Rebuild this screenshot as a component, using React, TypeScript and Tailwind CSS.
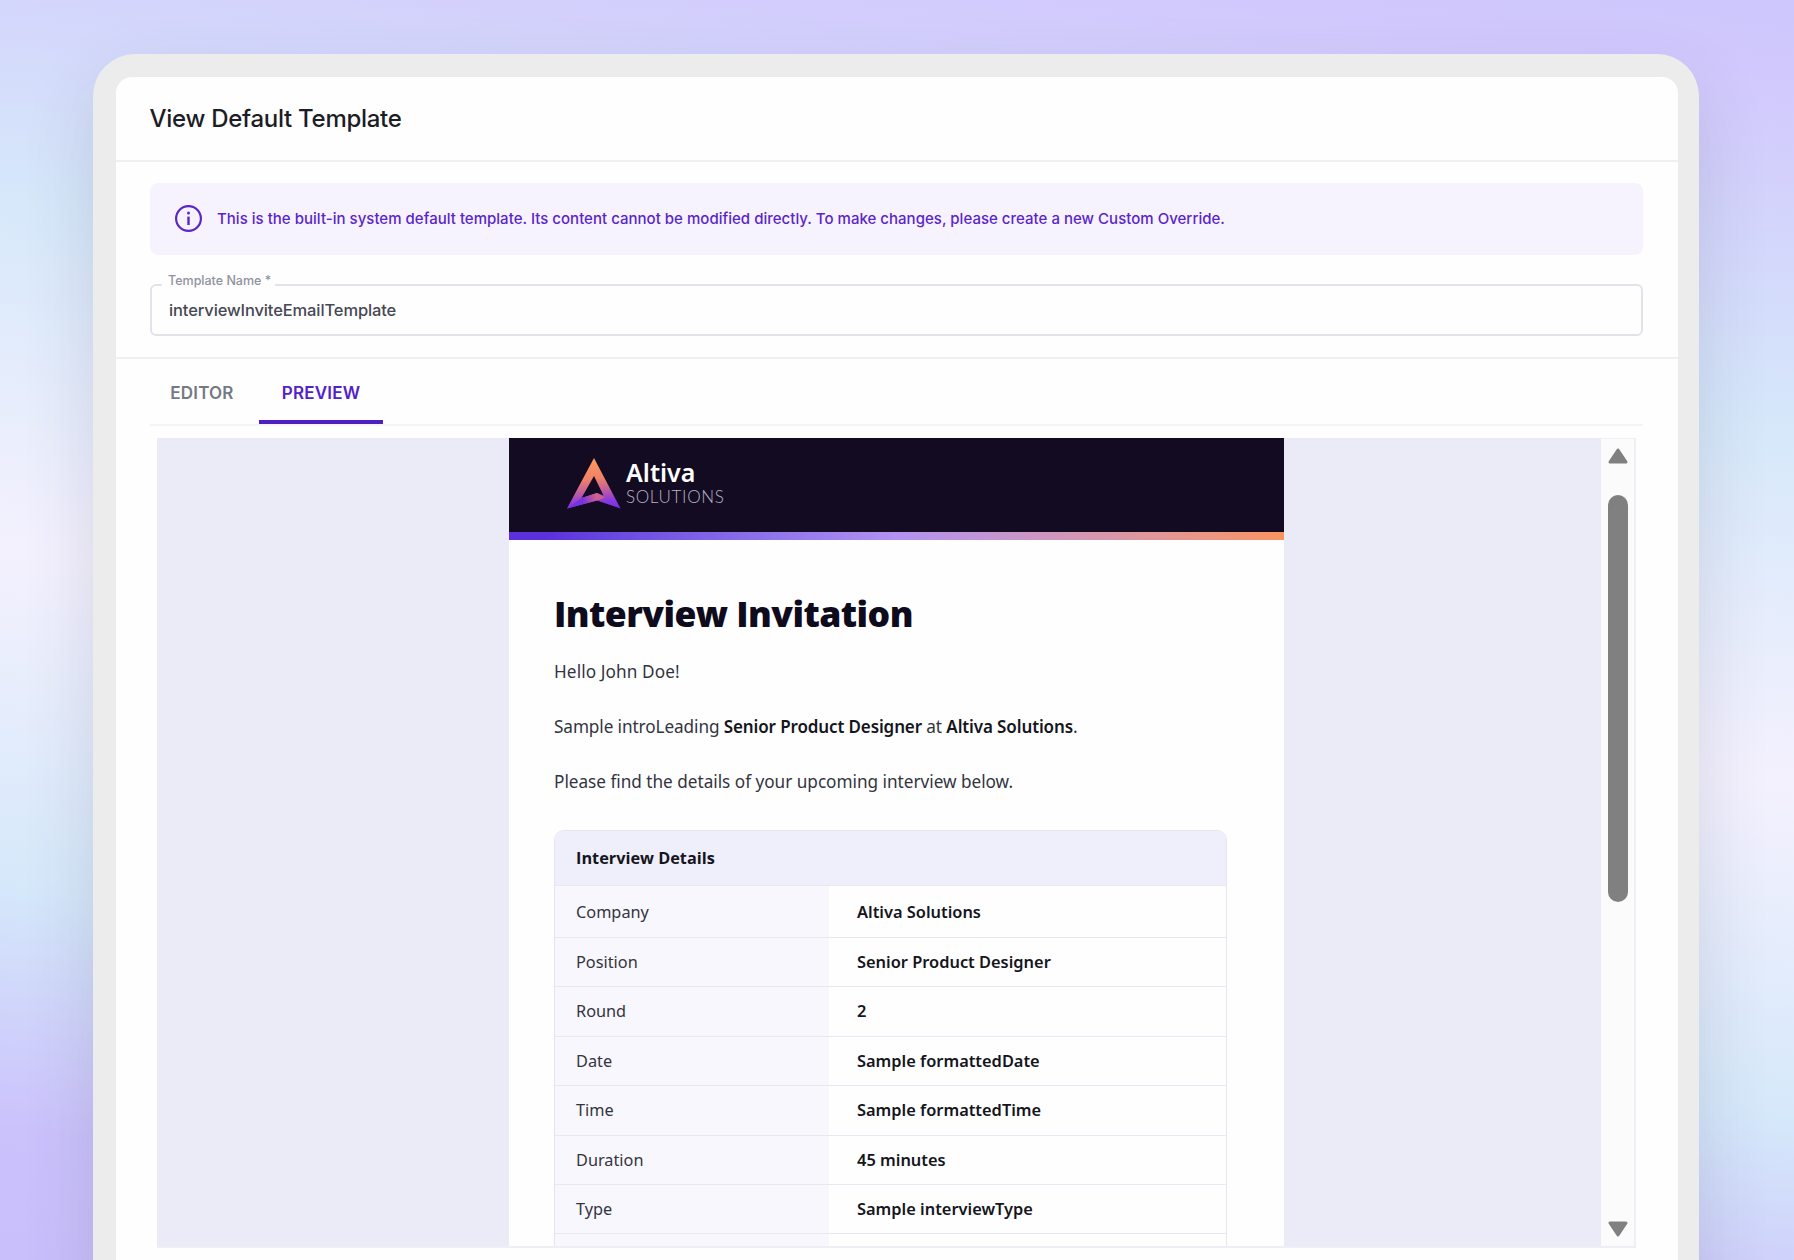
import type { ReactNode } from "react";

const details = [
  { label: "Company", value: "Altiva Solutions" },
  { label: "Position", value: "Senior Product Designer" },
  { label: "Round", value: "2" },
  { label: "Date", value: "Sample formattedDate" },
  { label: "Time", value: "Sample formattedTime" },
  { label: "Duration", value: "45 minutes" },
  { label: "Type", value: "Sample interviewType" },
];

function AltivaMark() {
  return (
    <svg width="54" height="52" viewBox="0 0 54 52" aria-hidden="true">
      <defs>
        <linearGradient id="mark" gradientUnits="userSpaceOnUse" x1="25" y1="0" x2="31" y2="51">
          <stop offset="0" stopColor="#fd9a5e" />
          <stop offset="0.4" stopColor="#f08268" />
          <stop offset="0.64" stopColor="#c25f9c" />
          <stop offset="0.85" stopColor="#8a3bdc" />
          <stop offset="1" stopColor="#7a2fe8" />
        </linearGradient>
        <linearGradient id="fold" gradientUnits="userSpaceOnUse" x1="0" y1="50" x2="40" y2="36">
          <stop offset="0" stopColor="#7a2fe8" />
          <stop offset="0.4" stopColor="#7434dc" />
          <stop offset="0.75" stopColor="#d4608f" />
          <stop offset="1" stopColor="#c9598f" />
        </linearGradient>
      </defs>
      <path
        d="M27 0 L53.5 50.5 L30 42.5 L0 50.5 Z M27 18 L14.5 40 L30 35 L36.5 37.5 Z"
        fill="url(#mark)"
        fillRule="evenodd"
      />
      <path d="M14.5 40 L30 35 L38 39.5 L30 42.5 L0 50.5 Z" fill="url(#fold)" />
    </svg>
  );
}

function InfoIcon() {
  return (
    <svg width="32" height="32" viewBox="0 0 32 32" fill="none" aria-hidden="true">
      <circle cx="16.5" cy="15.5" r="12.4" stroke="#5a25cb" strokeWidth="2.2" />
      <circle cx="16.5" cy="10.1" r="1.5" fill="#5a25cb" />
      <path d="M16.5 13.6 V22" stroke="#5a25cb" strokeWidth="2.4" />
    </svg>
  );
}

function Tab({ active, children }: { active?: boolean; children: ReactNode }) {
  return (
    <button
      className={
        active
          ? "h-full w-[124px] border-b-[4px] border-[#4f1fc4] pt-[9px] text-[#5221c8]"
          : "mr-[5px] h-full w-[104px] border-b-[4px] border-transparent pt-[9px] text-[#757984]"
      }
    >
      {children}
    </button>
  );
}

function Arrow({ down }: { down?: boolean }) {
  return (
    <svg width="20" height="16" viewBox="0 0 20 16" className={down ? "rotate-180" : ""} aria-hidden="true">
      <path
        d="M10 2 L18 14 L2 14 Z"
        fill="#808080"
        stroke="#808080"
        strokeWidth="3"
        strokeLinejoin="round"
      />
    </svg>
  );
}

function Strong({ children }: { children: ReactNode }) {
  return <b className="text-[17px] font-semibold tracking-[-0.12px] text-[#15151d]">{children}</b>;
}

function EmailPreview() {
  return (
    <article className="w-[775px] shrink-0 bg-[#fefefe] font-['Noto_Sans',sans-serif] text-[17.2px] text-[#33343f]">
      <header className="flex h-[94px] items-start bg-[#130b22] pt-[20px] pl-[58px]">
        <AltivaMark />
        <div className="-mt-px ml-[5px]">
          <p className="text-[25px] leading-[30px] font-semibold text-white">Altiva</p>
          <p className="font-['Lato',sans-serif] text-[17px] leading-[20px] font-light tracking-[0.65px] text-[#b9b5c4]">
            SOLUTIONS
          </p>
        </div>
      </header>
      <div className="h-[8px] bg-linear-to-r from-[#5b31dd] from-5% via-[#b292f2] to-[#fa935f]" />
      <div className="pr-[57px] pl-[45px]">
        <h1 className="pt-[49px] font-['Open_Sans',sans-serif] text-[35.5px] leading-[48px] font-extrabold tracking-[-0.55px] text-[#0e0b1c]">
          Interview Invitation
        </h1>
        <p className="mt-[21px] leading-[28px] tracking-[0.1px]">Hello John Doe!</p>
        <p className="mt-[27px] leading-[28px] tracking-[-0.1px]">
          Sample introLeading <Strong>Senior Product Designer</Strong> at <Strong>Altiva Solutions</Strong>.
        </p>
        <p className="mt-[27px] leading-[28px] tracking-[-0.02px]">
          Please find the details of your upcoming interview below.
        </p>
        <section className="mt-[34px] overflow-hidden rounded-t-[10px] border border-[#e6e5f2]">
          <h2 className="h-[54px] bg-[#efeefb] pl-[21px] font-['Open_Sans',sans-serif] text-[16.3px] leading-[55px] font-bold text-[#15151d]">
            Interview Details
          </h2>
          <dl>
            {details.map((row) => (
              <div
                key={row.label}
                className="flex h-[49.4px] border-t border-[#e9e8f2] leading-[48px] first:h-[52px] first:leading-[52px]"
              >
                <dt className="w-[274px] bg-[#f8f7fd] pl-[21px] text-[16.3px]">{row.label}</dt>
                <dd className="pl-[28px] text-[16.4px] font-semibold text-[#15151d]">{row.value}</dd>
              </div>
            ))}
            <div className="flex h-[49px] border-t border-[#e9e8f2]">
              <dt className="w-[274px] bg-[#f8f7fd]" />
            </div>
          </dl>
        </section>
      </div>
    </article>
  );
}

export default function App() {
  return (
    <main className="h-[1260px] w-[1794px] overflow-hidden bg-[linear-gradient(187.5deg,#cdc7fd_0%,#d2c9fd_6%,#d6e8fa_29%,#f4f1fe_52.4%,#d5e8fa_75%,#cbc2fc_91%,#c9bffb_100%)] pt-[54px] pl-[93px] font-['Inter',sans-serif]">
      <div className="h-[1300px] w-[1606px] rounded-[42px] bg-[#ececec] pt-[23px] pl-[23px] shadow-[0_30px_70px_rgba(60,60,90,0.16)]">
        <div className="h-full w-[1562px] rounded-t-[16px] bg-[#fefefe]">
          <header className="flex h-[85px] items-center border-b-2 border-[#f0f0f3] pl-[33.5px]">
            <h1 className="text-[24px] font-medium tracking-[-0.28px] text-[#1c1d26]">View Default Template</h1>
          </header>

          <section className="h-[197px] border-b-2 border-[#f0f0f4] pt-[21px] pr-[35px] pl-[34px]">
            <div className="flex h-[72px] items-center rounded-[8px] bg-[#f6f3fe] pl-[22px] text-[#5a25cb]">
              <InfoIcon />
              <p className="ml-[13px] text-[15px] font-medium tracking-[0.02px]">
                This is the built-in system default template. Its content cannot be modified directly. To make
                changes, please create a new Custom Override.
              </p>
            </div>
            <fieldset className="relative mt-[29px] h-[52px] rounded-[6px] border-2 border-[#e2e3ea] pl-[17px]">
              <label className="absolute -top-[15px] left-[10px] bg-[#fefefe] pr-[4px] pl-[6px] text-[12.5px] leading-[20px] font-medium text-[#9092a0]">
                Template Name *
              </label>
              <p className="text-[16.5px] leading-[48px] font-medium tracking-[-0.12px] text-[#464853]">
                interviewInviteEmailTemplate
              </p>
            </fieldset>
          </section>

          <div className="pr-[35px] pl-[34px]">
            <nav className="flex h-[67px] border-b-2 border-[#f3f3f8] text-[17px] font-semibold tracking-[0.2px]">
              <Tab>EDITOR</Tab>
              <Tab active>PREVIEW</Tab>
            </nav>
            <div className="mx-[7px] mt-[12px] flex h-[810px] border-b-2 border-[#eeeef5]">
              <div className="flex h-full flex-1 justify-center overflow-hidden bg-[#ebebf7] pl-[35px]">
                <EmailPreview />
              </div>
              <div className="flex h-full w-[35px] flex-col items-center border-t border-r-2 border-[#efeff5] bg-[#fbfbfc] pt-[9px] pb-[9px]">
                <Arrow />
                <div className="mt-[31px] h-[407px] w-[20px] rounded-full bg-[#808080]" />
                <div className="mt-auto flex">
                  <Arrow down />
                </div>
              </div>
            </div>
          </div>
        </div>
      </div>
    </main>
  );
}
